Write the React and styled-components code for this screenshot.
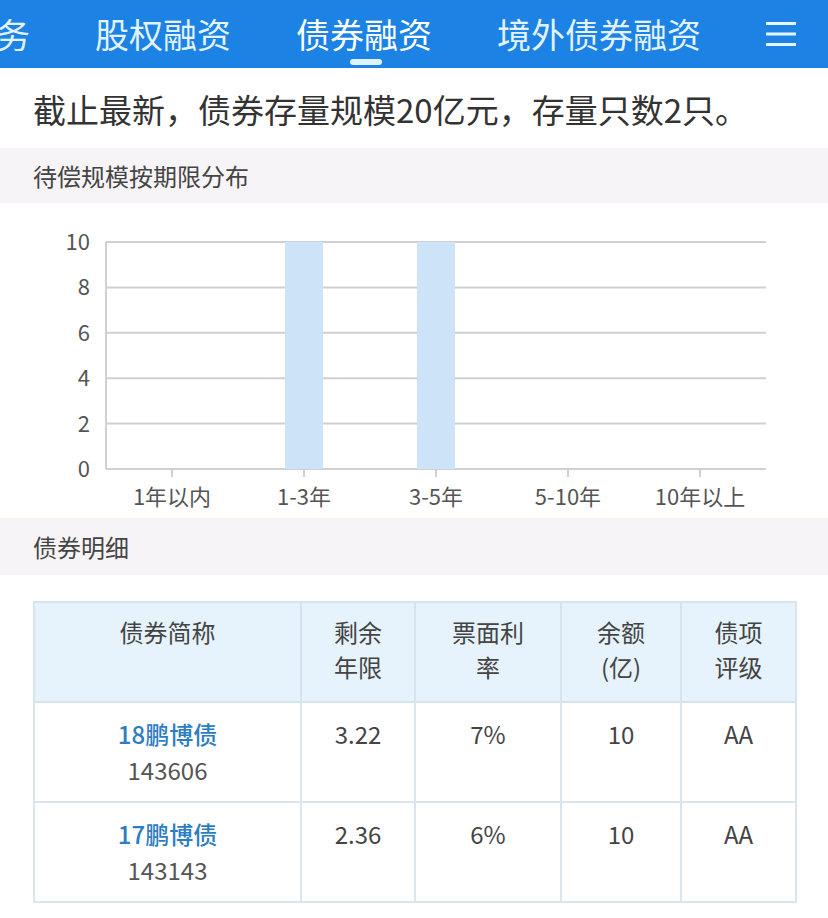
import React from 'react';
import styled, { createGlobalStyle } from 'styled-components';

const GlobalStyle = createGlobalStyle`
  body {
    margin: 0;
    background: #ffffff;
    font-family: "Noto Sans CJK SC", "Noto Sans", sans-serif;
  }
`;

const Page = styled.div`
  width: 828px;
  overflow: hidden;
`;

const NavBar = styled.div`
  position: relative;
  height: 68px;
  background: #1c82e4;
  display: flex;
  align-items: center;
  overflow: hidden;
`;

const Tabs = styled.div`
  display: flex;
  gap: 65px;
  margin-left: -38px;
  flex: 1;
  white-space: nowrap;
`;

const Tab = styled.div`
  position: relative;
  font-size: 34px;
  line-height: 68px;
  color: ${p => (p.$active ? '#ffffff' : '#e2f3ff')};
`;

const Indicator = styled.span`
  position: absolute;
  left: 50%;
  bottom: 3px;
  width: 32px;
  height: 6px;
  margin-left: -14px;
  border-radius: 3px;
  background: #dff2ff;
`;

const MenuButton = styled.div`
  width: 62px;
  height: 68px;
  display: flex;
  align-items: center;
  justify-content: flex-start;
  padding-left: 3px;
  background: #1c82e4;
`;

const Summary = styled.div`
  height: 80px;
  padding: 0 33px;
  display: flex;
  align-items: center;
  font-size: 33px;
  color: #333333;
  padding-top: 2px;
  box-sizing: border-box;
  white-space: nowrap;
`;

const SectionHead = styled.div`
  height: ${p => p.$h || 56}px;
  background: #f6f4f6;
  display: flex;
  align-items: center;
  padding-left: 33px;
  font-size: 24px;
  color: #444444;
`;

const ChartWrap = styled.div`
  height: 315px;
`;

const TableWrap = styled.div`
  padding: 26px 33px 14px;
`;

const Table = styled.table`
  width: 762px;
  border-collapse: collapse;
  table-layout: fixed;
  font-size: 24px;
  color: #444444;
  text-align: center;
`;

const Th = styled.th`
  background: #e6f2fc;
  border: 2px solid #d6e4f0;
  font-weight: 400;
  vertical-align: top;
  padding: 11px 0 0;
  height: 100px;
  box-sizing: border-box;
  line-height: 35px;
`;

const Td = styled.td`
  border: 2px solid #dbe5ee;
  vertical-align: top;
  padding: 13px 0 0;
  height: 100px;
  box-sizing: border-box;
  line-height: 36px;
`;

const BondName = styled.div`
  color: #2c7dc2;
  font-weight: 500;
`;

const BondCode = styled.div`
  color: #555555;
`;

const tabs = ['业务', '股权融资', '债券融资', '境外债券融资'];
const cats = ['1年以内', '1-3年', '3-5年', '5-10年', '10年以上'];
const values = [0, 10, 10, 0, 0];
const bonds = [
  { name: '18鹏博债', code: '143606', years: '3.22', rate: '7%', amount: '10', grade: 'AA' },
  { name: '17鹏博债', code: '143143', years: '2.36', rate: '6%', amount: '10', grade: 'AA' },
];

function Chart() {
  const left = 106;
  const right = 766;
  const top = 39;
  const bottom = 266;
  const step = (right - left) / cats.length;
  const ticks = [0, 2, 4, 6, 8, 10];
  const y = v => bottom - ((bottom - top) * v) / 10;
  return (
    <svg width="828" height="315" viewBox="0 0 828 315">
      {ticks.map(t => (
        <g key={t}>
          <line x1={left} x2={right} y1={y(t)} y2={y(t)} stroke="#d0d0d0" strokeWidth="2" />
          <text x="90" y={y(t) + 8} textAnchor="end" fontSize="22" fill="#555"
            fontFamily='"Noto Sans CJK SC", "Noto Sans", sans-serif'>{t}</text>
        </g>
      ))}
      <line x1={left} x2={left} y1={top} y2={bottom} stroke="#d0d0d0" strokeWidth="2" />
      {cats.map((c, i) => {
        const cx = left + step * i + step / 2;
        const v = values[i];
        return (
          <g key={c}>
            {v > 0 && (
              <rect x={cx - 19} y={y(v)} width="38" height={bottom - y(v)} fill="#cde4f8" />
            )}
            <line x1={cx} x2={cx} y1={bottom} y2={bottom + 8} stroke="#d0d0d0" strokeWidth="2" />
            <text x={cx} y={bottom + 36} textAnchor="middle" fontSize="22" fill="#555"
              fontFamily='"Noto Sans CJK SC", "Noto Sans", sans-serif'>{c}</text>
          </g>
        );
      })}
    </svg>
  );
}

export default function App() {
  return (
    <Page>
      <GlobalStyle />
      <NavBar>
        <Tabs>
          {tabs.map((t, i) => (
            <Tab key={t} $active={i === 2}>
              {t}
              {i === 2 && <Indicator />}
            </Tab>
          ))}
        </Tabs>
        <MenuButton>
          <svg width="30" height="26" viewBox="0 0 30 26">
            <rect x="0" y="1" width="30" height="3" fill="#e6f5ff" />
            <rect x="0" y="11.5" width="30" height="3" fill="#e6f5ff" />
            <rect x="0" y="22" width="30" height="3" fill="#e6f5ff" />
          </svg>
        </MenuButton>
      </NavBar>
      <Summary>截止最新，债券存量规模20亿元，存量只数2只。</Summary>
      <SectionHead $h={55}>待偿规模按期限分布</SectionHead>
      <ChartWrap>
        <Chart />
      </ChartWrap>
      <SectionHead $h={57}>债券明细</SectionHead>
      <TableWrap>
        <Table>
          <colgroup>
            <col style={{ width: 267 }} />
            <col style={{ width: 114 }} />
            <col style={{ width: 146 }} />
            <col style={{ width: 120 }} />
            <col style={{ width: 115 }} />
          </colgroup>
          <thead>
            <tr>
              <Th>债券简称</Th>
              <Th>剩余<br />年限</Th>
              <Th>票面利<br />率</Th>
              <Th>余额<br />(亿)</Th>
              <Th>债项<br />评级</Th>
            </tr>
          </thead>
          <tbody>
            {bonds.map(b => (
              <tr key={b.code}>
                <Td>
                  <BondName>{b.name}</BondName>
                  <BondCode>{b.code}</BondCode>
                </Td>
                <Td>{b.years}</Td>
                <Td>{b.rate}</Td>
                <Td>{b.amount}</Td>
                <Td>{b.grade}</Td>
              </tr>
            ))}
          </tbody>
        </Table>
      </TableWrap>
    </Page>
  );
}
